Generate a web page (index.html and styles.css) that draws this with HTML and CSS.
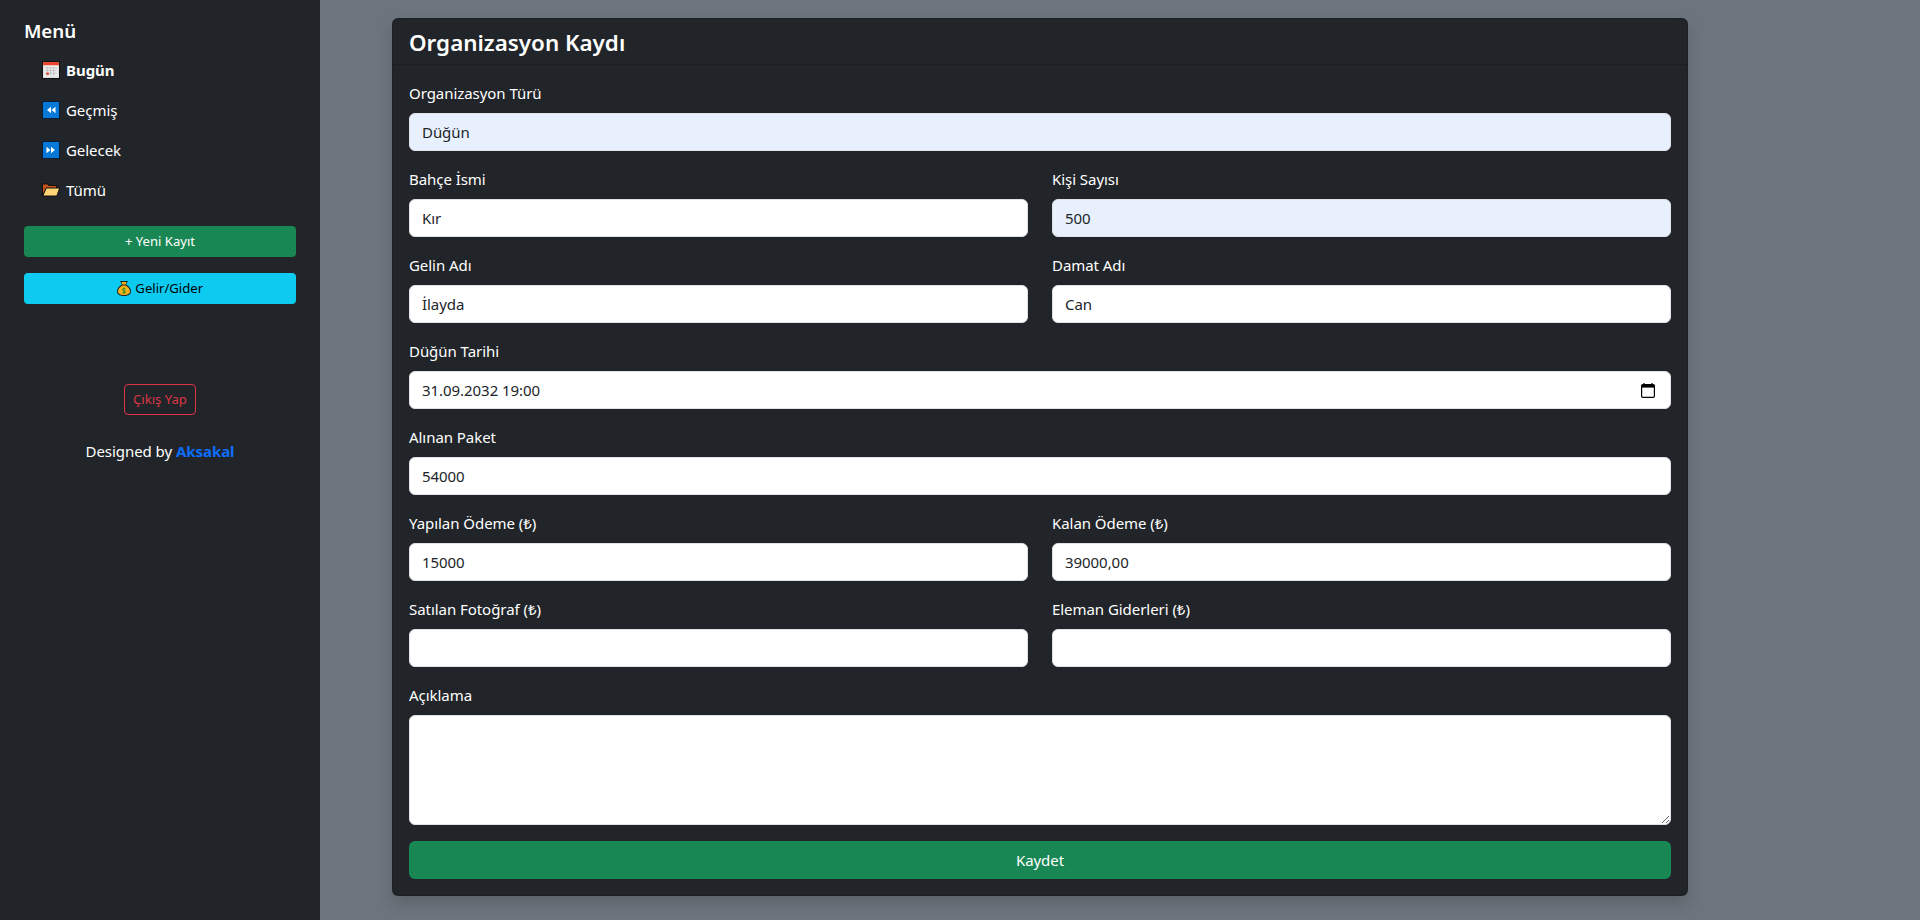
FILE: index.html
```html
<!DOCTYPE html>
<html lang="tr">
<head>
<meta charset="utf-8">
<title>Organizasyon Kaydı</title>
<link rel="stylesheet" href="styles.css">
</head>
<body>
<aside class="sidebar">
  <h5 class="menu-title">Menü</h5>
  <ul class="nav">
    <li><a class="nav-link active" href="#">
      <svg class="emoji" viewBox="0 0 17 17"><rect x="0" y="0" width="17" height="17" fill="#111"/><rect x="1" y="1" width="15" height="15" fill="#ececec"/><rect x="1" y="1" width="15" height="3" fill="#e8452c"/><path d="M3 6.500h11M3 9h11M3 11.500h11M5 6v8M8 6v8M11 6v8" stroke="#bdbdbd" stroke-width=".7"/><rect x="4" y="11" width="2.500" height="2" fill="#e8452c"/></svg>
      <span>Bugün</span></a></li>
    <li><a class="nav-link" href="#">
      <svg class="emoji" viewBox="0 0 18 18"><rect width="18" height="18" fill="#0b1d33"/><rect x="1" y="1" width="16" height="16" fill="#0678d8"/><path d="M9 5.700v6.600L5 9zM13.500 5.700v6.600L9.500 9z" fill="#fff"/></svg>
      <span>Geçmiş</span></a></li>
    <li><a class="nav-link" href="#">
      <svg class="emoji" viewBox="0 0 18 18"><rect width="18" height="18" fill="#0b1d33"/><rect x="1" y="1" width="16" height="16" fill="#0678d8"/><path d="M4.500 5.700v6.600l4-3.300zM9 5.700v6.600l4-3.300z" fill="#fff"/></svg>
      <span>Gelecek</span></a></li>
    <li><a class="nav-link" href="#">
      <svg class="emoji" viewBox="0 0 18 18"><path d="M0 2.500h6l1.500 1.500H15v2.500h3L15 15.500H0z" fill="#111"/><path d="M1 3.500h4.500L7 5h7v1.500H4l-3 6z" fill="#c8541c"/><path d="M4.500 7.500H17l-2.500 7H1.500z" fill="#ffd477"/></svg>
      <span>Tümü</span></a></li>
  </ul>
  <a class="btn btn-sm btn-success btn-block btn-first" href="#">+ Yeni Kayıt</a>
  <a class="btn btn-sm btn-info btn-block" href="#">
    <svg class="bag" viewBox="0 0 14 16"><path d="M3 1h8L9 4.500c3 1.500 5 4 5 7C14 14.500 11 16 7 16s-7-1.500-7-4.500c0-3 2-5.500 5-7z" fill="#222"/><path d="M4.500 2h5L8.500 4.500h-3zM5.300 5.500h3.400C11 6.800 13 9 13 11.500 13 13.800 10.500 15 7 15s-6-1.200-6-3.500C1 9 3 6.800 5.300 5.500z" fill="#f5b21a"/><path d="M7 7.500v6M8.500 9c-1-.8-3-.6-3 .7 0 1.500 3 .8 3 2.300 0 1.200-2 1.400-3 .6" stroke="#2e8b1e" stroke-width="1" fill="none"/></svg>
    <span class="bag-label">Gelir/Gider</span></a>
  <div class="logout-wrap"><a class="btn btn-sm btn-outline-danger" href="#">Çıkış Yap</a></div>
  <p class="credit">Designed by <a class="credit-link" href="#">Aksakal</a></p>
</aside>
<main class="content">
  <form class="card">
    <div class="card-header"><h4 class="card-title">Organizasyon Kaydı</h4></div>
    <div class="card-body">
      <div class="field">
        <label class="label">Organizasyon Türü</label>
        <input class="control autofilled" value="Düğün">
      </div>
      <div class="row">
        <div class="field"><label class="label">Bahçe İsmi</label><input class="control" value="Kır"></div>
        <div class="field"><label class="label">Kişi Sayısı</label><input class="control autofilled" value="500"></div>
      </div>
      <div class="row">
        <div class="field"><label class="label">Gelin Adı</label><input class="control" value="İlayda"></div>
        <div class="field"><label class="label">Damat Adı</label><input class="control" value="Can"></div>
      </div>
      <div class="field">
        <label class="label">Düğün Tarihi</label>
        <div class="date-wrap">
          <input class="control date-input" value="31.09.2032 19:00">
          <svg class="date-icon" viewBox="0 0 14 15"><path d="M3 0v2M11 0v2" stroke="#000" stroke-width="1.200"/><rect x=".6" y="1.600" width="12.800" height="12.800" rx="1.200" fill="#fff" stroke="#000" stroke-width="1.200"/><rect x="1" y="2" width="12" height="2.600" fill="#000"/></svg>
        </div>
      </div>
      <div class="field">
        <label class="label">Alınan Paket</label>
        <input class="control" value="54000">
      </div>
      <div class="row">
        <div class="field"><label class="label">Yapılan Ödeme (₺)</label><input class="control" value="15000"></div>
        <div class="field"><label class="label">Kalan Ödeme (₺)</label><input class="control" value="39000,00"></div>
      </div>
      <div class="row">
        <div class="field"><label class="label">Satılan Fotoğraf (₺)</label><input class="control" value=""></div>
        <div class="field"><label class="label">Eleman Giderleri (₺)</label><input class="control" value=""></div>
      </div>
      <div class="field">
        <label class="label">Açıklama</label>
        <textarea class="control area"></textarea>
      </div>
      <button class="btn btn-success btn-save" type="button">Kaydet</button>
    </div>
  </form>
</main>
</body>
</html>
```

FILE: styles.css
```css
* { box-sizing: border-box; }
html { height: 920px; overflow: hidden; }
body {
  margin: 0;
  display: flex;
  height: 920px;
  overflow: hidden;
  background: #6c757d;
  color: #fff;
  font-family: "Noto Sans", "Open Sans", sans-serif;
  font-size: 15px;
  line-height: 24px;
  letter-spacing: -0.05px;
}
.sidebar {
  width: 320px;
  flex: none;
  background: #212529;
  padding: 19px 24px 0;
}
.menu-title {
  margin: 0 0 7px;
  font-size: 18.750px;
  line-height: 24px;
  font-weight: 600;
}
.nav { list-style: none; margin: 0 0 16px; padding: 0; }
.nav-link {
  display: flex;
  align-items: center;
  gap: 6px;
  padding: 8px 18px;
  color: #fff;
  text-decoration: none;
}
.nav-link.active { font-weight: 700; }
.emoji { width: 18px; height: 18px; flex: none; }
.btn {
  display: inline-block;
  text-align: center;
  text-decoration: none;
  border: 1px solid transparent;
  border-radius: 6px;
  font-family: inherit;
  font-size: 15px;
  line-height: 24px;
  letter-spacing: inherit;
  padding: 6px 12px;
  cursor: pointer;
}
.btn-sm { font-size: 13.100px; line-height: 21px; padding: 4px 8px; border-radius: 4px; letter-spacing: 0; }
.btn-block { display: block; width: 100%; }
.btn-first { margin-bottom: 16px; }
.btn-success { background: #198754; color: #fff; }
.btn-info { background: #0dcaf0; color: #000; }
.btn-outline-danger { border-color: #dc3545; color: #dc3545; }
.bag { width: 14px; height: 16px; vertical-align: -3px; }
.bag-label { margin-left: 1px; }
.logout-wrap { margin-top: 80px; text-align: center; }
.credit { margin: 24px 0 0; text-align: center; }
.credit-link { color: #0d6efd; font-weight: 700; text-decoration: none; }
.content {
  flex: 1;
  min-width: 0;
  padding: 18px 232px 0 72px;
}
.card {
  display: block;
  background: #212529;
  border: 1px solid rgba(0, 0, 0, .125);
  border-radius: 6px;
  box-shadow: 0 8px 16px rgba(0, 0, 0, .15);
}
.card-header {
  padding: 9px 16px 7px;
  border-bottom: 1px solid rgba(0, 0, 0, .125);
  height: 46px;
}
.card-title { margin: 0; font-size: 22.400px; line-height: 29px; font-weight: 600; letter-spacing: 0; }
.card-body { padding: 16px; }
.row { display: grid; grid-template-columns: 1fr 1fr; column-gap: 24px; }
.field { margin-bottom: 16px; }
.label { display: block; margin-bottom: 8px; }
.control {
  display: block;
  width: 100%;
  height: 38px;
  padding: 6px 12px;
  border: 1px solid #dee2e6;
  border-radius: 6px;
  background: #fff;
  color: #212529;
  font-family: inherit;
  font-size: 15px;
  line-height: 24px;
  letter-spacing: inherit;
  outline: none;
}
.autofilled { background: #e8f0fe; }
.date-wrap { position: relative; }
.date-icon { position: absolute; right: 16px; top: 12px; width: 14px; height: 15px; }
.area { height: 110px; }
.btn-save { display: block; width: 100%; height: 38px; }
```
